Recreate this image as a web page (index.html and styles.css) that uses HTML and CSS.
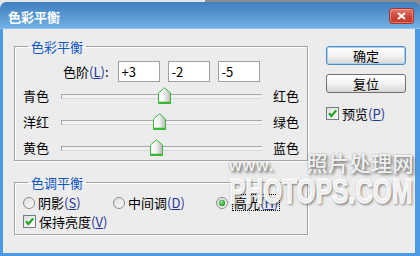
FILE: index.html
```html
<!DOCTYPE html>
<html lang="zh-CN">
<head>
  <meta charset="UTF-8" />
  <title>色彩平衡</title>
  <link rel="stylesheet" href="styles.css">
</head>
<body>
  <svg class="defs" width="0" height="0">
    <defs>
      <linearGradient id="thumb-fill" x1="0" y1="0" x2="1" y2="0">
        <stop offset="0" stop-color="#ffffff" />
        <stop offset="0.45" stop-color="#f4f4f4" />
        <stop offset="1" stop-color="#b8b8b8" />
      </linearGradient>
      <linearGradient id="box-fill" x1="0" y1="0" x2="1" y2="1">
        <stop offset="0" stop-color="#dcdcdc" />
        <stop offset="1" stop-color="#ffffff" />
      </linearGradient>
      <radialGradient id="dot-fill" cx="0.4" cy="0.35" r="0.7">
        <stop offset="0" stop-color="#8fe08f" />
        <stop offset="1" stop-color="#1f9a1f" />
      </radialGradient>
    </defs>
  </svg>

  <div class="window">
    <div class="titlebar">
      <span class="title">色彩平衡</span>
      <span class="close">
        <svg width="9" height="8" viewBox="0 0 9 8">
          <path d="M1 1 L8 7 M8 1 L1 7" stroke="#fff" stroke-width="2" />
        </svg>
      </span>
    </div>

    <div class="client">
      <div class="left">
        <fieldset class="group balance">
          <legend>色彩平衡</legend>
          <div class="level-row">
            <span class="level-label">色阶<span class="key">(<u>L</u>)</span>:</span>
            <input type="text" value="+3" />
            <input type="text" value="-2" />
            <input type="text" value="-5" />
          </div>

          <div class="slider-row">
            <span class="side">青色</span>
            <div class="track">
              <svg class="thumb" style="left: calc(51.5% - 6.5px)" width="13" height="17" viewBox="0 0 13 17">
                <path d="M0.5 16.5 V6 L6.5 0.8 L12.5 6 V16.5 Z" fill="url(#thumb-fill)" stroke="#36b836" />
                <path d="M1 15.5 H12" stroke="#36b836" stroke-width="1.4" />
              </svg>
            </div>
            <span class="side end">红色</span>
          </div>
          <div class="slider-row">
            <span class="side">洋红</span>
            <div class="track">
              <svg class="thumb" style="left: calc(49% - 6.5px)" width="13" height="17" viewBox="0 0 13 17">
                <path d="M0.5 16.5 V6 L6.5 0.8 L12.5 6 V16.5 Z" fill="url(#thumb-fill)" stroke="#36b836" />
                <path d="M1 15.5 H12" stroke="#36b836" stroke-width="1.4" />
              </svg>
            </div>
            <span class="side end">绿色</span>
          </div>
          <div class="slider-row">
            <span class="side">黄色</span>
            <div class="track">
              <svg class="thumb" style="left: calc(47.5% - 6.5px)" width="13" height="17" viewBox="0 0 13 17">
                <path d="M0.5 16.5 V6 L6.5 0.8 L12.5 6 V16.5 Z" fill="url(#thumb-fill)" stroke="#36b836" />
                <path d="M1 15.5 H12" stroke="#36b836" stroke-width="1.4" />
              </svg>
            </div>
            <span class="side end">蓝色</span>
          </div>
        </fieldset>

        <fieldset class="group tone">
          <legend>色调平衡</legend>
          <div class="radio-row">
            <label class="opt first">
              <svg width="12" height="12" viewBox="0 0 12 12"><circle cx="6" cy="6" r="5.5" fill="url(#box-fill)" stroke="#8c8c8c" /></svg>
              <span>阴影<span class="key">(<u>S</u>)</span></span>
            </label>
            <label class="opt second">
              <svg width="12" height="12" viewBox="0 0 12 12"><circle cx="6" cy="6" r="5.5" fill="url(#box-fill)" stroke="#8c8c8c" /></svg>
              <span>中间调<span class="key">(<u>D</u>)</span></span>
            </label>
            <label class="opt">
              <svg width="12" height="12" viewBox="0 0 12 12"><circle cx="6" cy="6" r="5.5" fill="url(#box-fill)" stroke="#8c8c8c" /><circle cx="6" cy="6" r="3.2" fill="url(#dot-fill)" /></svg>
              <span class="focus">高光<span class="key">(<u>H</u>)</span></span>
            </label>
          </div>
          <label class="check-row">
            <svg width="13" height="13" viewBox="0 0 13 13">
              <rect x="0.5" y="0.5" width="12" height="12" fill="url(#box-fill)" stroke="#6f7c88" />
              <path d="M3 6.2 L5.4 9 L10.2 3.4" fill="none" stroke="#22a622" stroke-width="2.2" />
            </svg>
            <span>保持亮度<span class="key">(<u>V</u>)</span></span>
          </label>
        </fieldset>
      </div>

      <div class="right">
        <button class="btn default">确定</button>
        <button class="btn">复位</button>
        <label class="check-row preview">
          <svg width="13" height="13" viewBox="0 0 13 13">
            <rect x="0.5" y="0.5" width="12" height="12" fill="url(#box-fill)" stroke="#6f7c88" />
            <path d="M3 6.2 L5.4 9 L10.2 3.4" fill="none" stroke="#22a622" stroke-width="2.2" />
          </svg>
          <span>预览<span class="key">(<u>P</u>)</span></span>
        </label>
      </div>

      <div class="watermark">
        <div class="wm-top">
          <span class="wm-www">www.</span>
          <span class="wm-cn">照片处理网</span>
        </div>
        <div class="wm-big">PHOTOPS.COM</div>
      </div>
    </div>
  </div>
</body>
</html>
```

FILE: styles.css
```css
* {
  box-sizing: border-box;
}
body {
  margin: 0;
  background: linear-gradient(to right, #e6e6e6 0 205px, #8c8c8c 205px);
  font-family: "Noto Sans CJK SC", "Noto Sans", sans-serif;
  font-size: 13px;
  line-height: 15px;
  color: #000;
}
.defs {
  display: block;
}
.window {
  margin-top: 2px;
  height: 254px;
  padding: 0 5px 3px 3px;
  background: #4d9ae4;
  border-radius: 7px 7px 0 0;
  overflow: hidden;
  display: flex;
  flex-direction: column;
}
.titlebar {
  height: 27px;
  margin: 0 -5px 0 -3px;
  padding: 0 6px 0 8px;
  background: linear-gradient(#3f7ec1, #5494d0 45%, #72b1e5);
  border-bottom: 1px solid #8cc6f2;
  display: flex;
  align-items: center;
  justify-content: space-between;
}
.title {
  color: #fff;
  font-weight: bold;
  font-size: 13px;
  margin-top: 2px;
}
.close {
  width: 25px;
  height: 16px;
  margin-top: 2px;
  border: 1px solid #a8342a;
  border-radius: 3px;
  background: linear-gradient(#e77a6c, #cc4536 55%, #c13a2c);
  box-shadow: inset 0 0 0 1px rgba(255, 200, 190, 0.45);
  display: flex;
  align-items: center;
  justify-content: center;
}
.client {
  flex: 1;
  position: relative;
  background: #ececec;
  padding: 10px 0 0 11px;
  display: flex;
  gap: 18px;
}
.left {
  width: 294px;
}
.group {
  margin: 0;
  padding: 0 0 0 8px;
  min-width: 0;
  border: 1px solid #a3a3a3;
  box-shadow: inset 1px 1px 0 #fff, 1px 1px 0 #fff;
}
.group legend {
  margin-left: 5px;
  padding: 0 3px;
  color: #0c55c2;
  line-height: 15px;
}
.level-row {
  display: flex;
  align-items: center;
  gap: 8px;
  margin-top: 7px;
  padding-left: 40px;
}
.level-label {
  margin-right: 1px;
}
.key {
  color: #24359a;
}
.level-row input {
  width: 42px;
  height: 21px;
  border: 1px solid #a0a0a0;
  padding: 0 3px;
  font-family: inherit;
  font-size: 13px;
  background: #fff;
  color: #000;
}
.slider-row {
  display: flex;
  align-items: center;
  height: 26px;
}
.balance .slider-row:first-of-type {
  margin-top: 5px;
}
.side {
  width: 38px;
}
.side.end {
  width: auto;
  margin-left: 11px;
}
.track {
  position: relative;
  width: 201px;
  height: 26px;
}
.track::before {
  content: "";
  position: absolute;
  left: 0;
  right: 0;
  top: 12px;
  height: 3px;
  background: #f2f2f2;
  border-top: 1px solid #a8a8a8;
  border-left: 1px solid #a8a8a8;
  border-bottom: 1px solid #d8d8d8;
}
.thumb {
  position: absolute;
  top: 5px;
}
.tone {
  margin-top: 14px;
  padding-bottom: 4px;
}
.radio-row {
  display: flex;
  align-items: center;
  height: 17px;
  margin-top: 4px;
}
.opt {
  display: flex;
  align-items: center;
  gap: 3px;
}
.opt.first {
  width: 90px;
}
.opt.second {
  width: 103px;
}
.focus {
  border: 1px dotted #000;
  padding: 0 1px;
  margin-left: 1px;
}
.check-row {
  display: flex;
  align-items: center;
  gap: 3px;
  height: 17px;
  margin-top: 2px;
}
.right {
  display: flex;
  flex-direction: column;
  margin-top: 7px;
}
.btn {
  width: 80px;
  height: 19px;
  padding: 0;
  font-family: inherit;
  font-size: 13px;
  line-height: 15px;
  color: #000;
  border: 1px solid #707070;
  border-radius: 3px;
  background: linear-gradient(#ffffff, #f3f3f3 50%, #d6d6d6);
}
.btn.default {
  border-color: #4a8cc8;
  box-shadow: inset 0 0 0 1px #a9d3f5;
}
.btn + .btn {
  margin-top: 9px;
}
.preview {
  margin-top: 13px;
  height: 15px;
}
.watermark {
  position: absolute;
  left: 226px;
  top: 122px;
  width: 185px;
  color: rgba(255, 255, 255, 0.9);
  text-shadow: 2px 2px 3px rgba(0, 0, 0, 0.45), 0 0 2px rgba(0, 0, 0, 0.35);
}
.wm-top {
  display: flex;
  justify-content: space-between;
  align-items: baseline;
}
.wm-www {
  font-family: "Liberation Sans", sans-serif;
  font-weight: bold;
  font-size: 16px;
  letter-spacing: 1px;
}
.wm-cn {
  font-size: 21px;
  line-height: 22px;
  font-weight: 500;
  letter-spacing: 0.5px;
}
.wm-big {
  font-family: "Liberation Sans", sans-serif;
  font-weight: bold;
  font-size: 35px;
  line-height: 35px;
  white-space: nowrap;
  -webkit-text-stroke: 1.5px rgba(255, 255, 255, 0.9);
  transform: scaleX(0.7);
  transform-origin: left top;
}
```
